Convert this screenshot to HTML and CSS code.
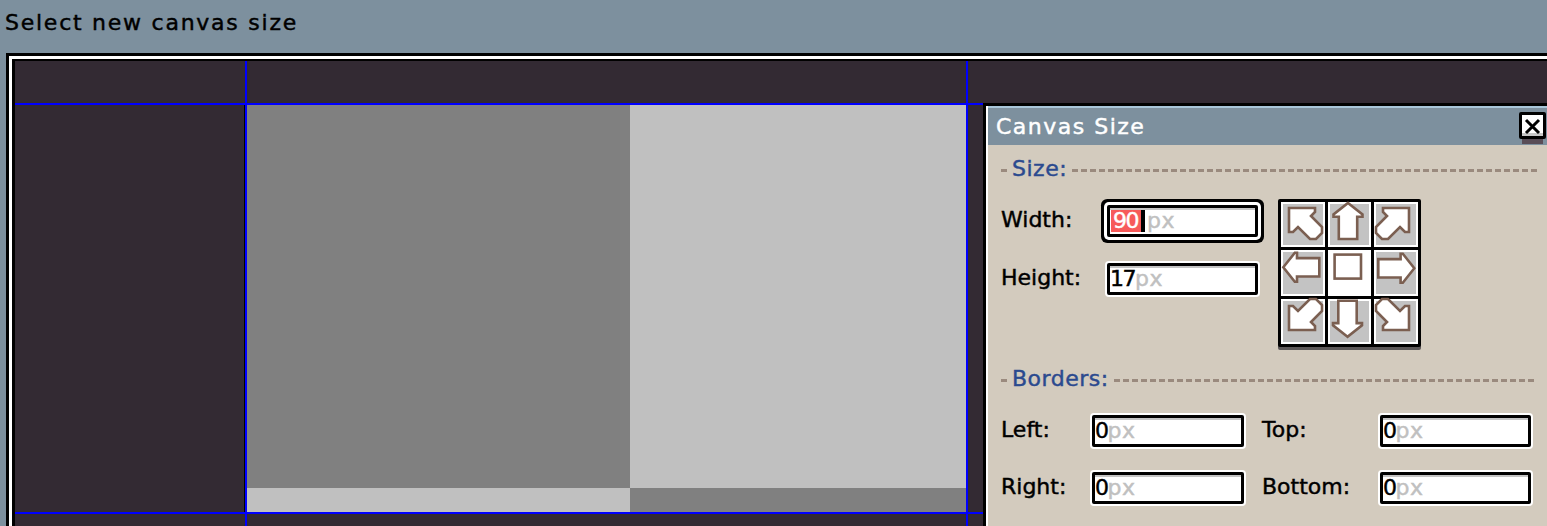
FILE: index.html
```html
<!DOCTYPE html>
<html>
<head>
<meta charset="utf-8">
<title>Canvas Size</title>
<link rel="stylesheet" href="styles.css">
</head>
<body>
<div class="status">Select new canvas size</div>

<div class="frame">
  <div class="frame-inner">
    <div class="editor">
      <div class="canvas">
        <div class="sq-d"></div>
        <div class="sq-l"></div>
        <div class="sq-l"></div>
        <div class="sq-d"></div>
      </div>
      <div class="hl hl1"></div>
      <div class="hl hl2"></div>
      <div class="vl vl1"></div>
      <div class="vl vl2"></div>
    </div>
  </div>
</div>

<div class="dialog">
  <div class="dialog-inner">
    <div class="titlebar">
      <span class="title">Canvas Size</span>
      <div class="close">
        <svg viewBox="0 0 21 21"><path class="x" d="M4 5L17 18M17 5L4 18"/></svg>
      </div>
    </div>
    <div class="dbody">
      <div class="sechead">
        <div class="dash-lead"></div>
        <span class="sectitle">Size:</span>
        <div class="dash"></div>
      </div>

      <div class="sizerow">
        <div class="form">
          <div class="label">Width:</div>
          <div class="field focus"><span class="sel">90</span><span class="caret"></span><span class="unit">px</span></div>
          <div class="label">Height:</div>
          <div class="field"><span class="val">17</span><span class="unit">px</span></div>
        </div>

        <div class="anchor">
          <div class="cell"><svg viewBox="0 0 44 45"><path class="ic" d="M8 6H34V10L30 14L41 25V31L35 37H29L17 25L12 30H8Z"/></svg></div>
          <div class="cell"><svg viewBox="0 0 43 45"><path class="ic" transform="translate(20 19.5)" d="M0 -18.5L14.5 -7V-4.8H9.2V17.5H-9.2V-4.8H-14.5V-7Z"/></svg></div>
          <div class="cell"><svg viewBox="0 0 44 45"><path class="ic" transform="translate(43 0) scale(-1 1)" d="M8 6H34V10L30 14L41 25V31L35 37H29L17 25L12 30H8Z"/></svg></div>

          <div class="cell"><svg viewBox="0 0 44 46"><path class="ic" transform="translate(20.8 17.3) rotate(-90)" d="M0 -18.5L14.5 -7V-4.8H9.2V17.5H-9.2V-4.8H-14.5V-7Z"/></svg></div>
          <div class="cell c"><svg viewBox="0 0 43 46"><rect class="ic" x="6.6" y="4.6" width="26.4" height="24"/></svg></div>
          <div class="cell"><svg viewBox="0 0 44 46"><path class="ic" transform="translate(21.8 18.3) rotate(90)" d="M0 -18.5L14.5 -7V-4.8H9.2V17.5H-9.2V-4.8H-14.5V-7Z"/></svg></div>

          <div class="cell"><svg viewBox="0 0 44 45"><path class="ic" transform="translate(0 37) scale(1 -1)" d="M8 6H34V10L30 14L41 25V31L35 37H29L17 25L12 30H8Z"/></svg></div>
          <div class="cell"><svg viewBox="0 0 43 45"><path class="ic" transform="translate(19.5 19.3) rotate(180)" d="M0 -18.5L14.5 -7V-4.8H9.2V17.5H-9.2V-4.8H-14.5V-7Z"/></svg></div>
          <div class="cell"><svg viewBox="0 0 44 45"><path class="ic" transform="translate(43 37) scale(-1 -1)" d="M8 6H34V10L30 14L41 25V31L35 37H29L17 25L12 30H8Z"/></svg></div>
        </div>
      </div>

      <div class="sechead bordhead">
        <div class="dash-lead"></div>
        <span class="sectitle">Borders:</span>
        <div class="dash"></div>
      </div>

      <div class="bform">
        <div class="label">Left:</div>
        <div class="field"><span class="val">0</span><span class="unit">px</span></div>
        <div class="label t">Top:</div>
        <div class="field"><span class="val">0</span><span class="unit">px</span></div>
        <div class="label">Right:</div>
        <div class="field"><span class="val">0</span><span class="unit">px</span></div>
        <div class="label t">Bottom:</div>
        <div class="field"><span class="val">0</span><span class="unit">px</span></div>
      </div>
    </div>
  </div>
</div>
</body>
</html>
```

FILE: styles.css
```css
html, body {
  margin: 0;
  padding: 0;
  overflow: hidden;
}

body {
  position: relative;
  width: 1547px;
  height: 526px;
  background: #7d909e;
  font-family: "DejaVu Sans", "Liberation Sans", sans-serif;
  font-size: 22px;
  line-height: 26px;
  color: #000;
  -webkit-text-stroke: 0.45px currentColor;
}

.status {
  height: 26px;
  padding: 10px 0 17px 5px;
  letter-spacing: 1.75px;
  white-space: nowrap;
}

/* editor frame */
.frame {
  margin-left: 6px;
  width: 1600px;
  height: 480px;
  border-top: 3px solid #000;
  border-left: 3px solid #000;
  background: #fff;
  padding: 3px 0 0 3px;
}

.frame-inner {
  border-top: 2px solid #000;
  border-left: 3px solid #000;
}

.editor {
  display: grid;
  grid-template-columns: 230px 2px 719px 2px 1fr;
  grid-template-rows: 42px 2px 407px 2px 1fr;
  height: 470px;
  background: #332a33;
}

.canvas {
  grid-row: 3;
  grid-column: 3;
  display: grid;
  grid-template-columns: 383px 1fr;
  grid-template-rows: 383px 1fr;
  box-shadow: -3px 0 0 #000;
}

.sq-d { background: #808080; }
.sq-l { background: #c0c0c0; }

.hl {
  grid-column: 1 / -1;
  background: #0000ff;
}
.hl1 { grid-row: 2; }
.hl2 { grid-row: 4; }

.vl {
  grid-row: 1 / -1;
  background: #0000ff;
}
.vl1 { grid-column: 2; }
.vl2 { grid-column: 4; }

/* dialog window */
.dialog {
  position: absolute;
  left: 983px;
  top: 103px;
  width: 564px;
  height: 440px;
  border: 3px solid #000;
}

.dialog-inner {
  height: 100%;
  border-left: 2px solid #fff;
  border-right: 2px solid #fff;
  background: #d3cbbe;
}

.titlebar {
  display: flex;
  align-items: flex-start;
  height: 31px;
  padding: 6px 2px 0 8px;
  background: #7d909e;
  border-top: 2px solid #a9c6d9;
  color: #fff;
}

.title {
  letter-spacing: 1.5px;
  white-space: nowrap;
}

.close {
  margin-left: auto;
  margin-top: -2px;
  width: 21px;
  height: 21px;
  border: 3px solid #000;
  border-radius: 2px;
  background: #fff;
  box-shadow: inset 0 -3px 0 #c8c8c8, 0 8px 0 -3px #594d57;
}

.close svg {
  display: block;
  width: 21px;
  height: 21px;
}

.x {
  stroke: #000;
  stroke-width: 3;
  fill: none;
}

.dbody {
  padding: 11px 11px 0 13px;
}

.sechead {
  display: flex;
  align-items: center;
  height: 26px;
  color: #2b4a8f;
}

.sectitle {
  letter-spacing: 0.5px;
  white-space: nowrap;
}

.dash-lead,
.dash {
  height: 3px;
  background: repeating-linear-gradient(90deg, #9a8a7e 0 6px, transparent 6px 9px);
}

.dash-lead {
  width: 9px;
  margin: 3px 2px 0 0;
}

.dash {
  flex: 1;
  margin: 3px 0 0 5px;
}

.sizerow {
  display: flex;
  align-items: flex-start;
  margin-top: 17px;
}

.form {
  display: grid;
  grid-template-columns: 106px 151px;
  grid-auto-rows: 32px;
  row-gap: 26px;
  padding-top: 6px;
  align-items: center;
}

.label {
  margin-bottom: 3px;
  white-space: nowrap;
}

.label.t {
  padding-left: 18px;
}

.field {
  box-sizing: border-box;
  height: 32px;
  border: 3px solid #000;
  border-radius: 2px;
  background: #fff;
  box-shadow: 0 0 0 2px #fff, inset 0 2px 0 #c4c4c4;
  line-height: 26px;
  white-space: nowrap;
  overflow: hidden;
}

.field.focus {
  box-shadow: 0 0 0 3px #fff, 0 0 0 6px #000, inset 0 2px 0 #c4c4c4;
  overflow: visible;
}

.val {
  letter-spacing: -1.5px;
}

.unit {
  color: #c0c0c0;
  letter-spacing: 0.5px;
}

.sel {
  display: inline-block;
  vertical-align: top;
  height: 22px;
  margin: 2px 0 0 1px;
  padding: 0 3px 0 2px;
  line-height: 22px;
  background: #f75a5a;
  color: #fff;
  letter-spacing: -1.5px;
}

.caret {
  display: inline-block;
  vertical-align: top;
  width: 4px;
  height: 22px;
  margin: 2px 2px 0 0;
  background: #000;
}

.anchor {
  display: grid;
  grid-template-columns: 44px 43px 44px;
  grid-template-rows: 45px 46px 45px;
  gap: 3px;
  padding: 3px;
  margin-left: 20px;
  background: #000;
  border-radius: 2px;
  box-shadow: 0 3px 0 #5c5858;
}

.cell {
  background: #c3c3c3;
  box-shadow: inset 0 0 0 2px #fff;
}

.cell.c {
  background: #fff;
}

.cell svg {
  display: block;
  width: 100%;
  height: 100%;
  overflow: visible;
}

.ic {
  fill: #fff;
  stroke: #7b5f51;
  stroke-width: 2.6;
  stroke-linejoin: miter;
}

.bordhead {
  margin-top: 19px;
}

.bform {
  display: grid;
  grid-template-columns: 91px 152px 136px 151px;
  grid-auto-rows: 32px;
  row-gap: 25px;
  margin-top: 23px;
  align-items: center;
}
```
